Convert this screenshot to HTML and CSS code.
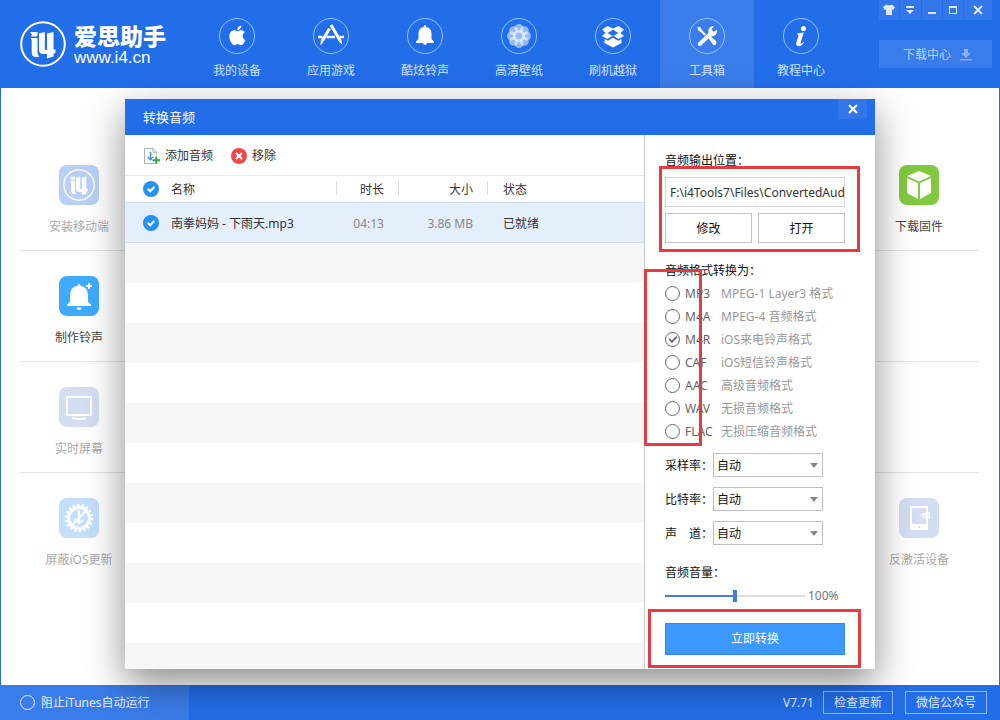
FILE: index.html
```html
<!DOCTYPE html>
<html lang="zh-CN">
<head>
<meta charset="utf-8">
<title>爱思助手</title>
<link rel="stylesheet" href="styles.css">
</head>
<body>
<svg class="defs" width="0" height="0" aria-hidden="true">
  <defs>
    <symbol id="mark" viewBox="0 0 46 46">
      <circle cx="23" cy="23" r="21.8" fill="none" stroke="currentColor" stroke-width="2"/>
      <g fill="currentColor">
        <path d="M10 11h7.500v3.500l-1.500 1h-5l1-2.300z"/>
        <path d="M10.500 17h7v14.500q0 2.500 1.500 3.200v1.300h-3q-4.300-.2-4.300-4V19z"/>
        <path d="M19 12.500l5.800-1.500v16.500q0 1.500 1.200 1.500h1V12.500L33.500 11v17.500h2v3L33.500 33v2.500L27 37.500V33h-3.500q-4.500 0-4.500-4z"/>
      </g>
    </symbol>
    <symbol id="tick" viewBox="0 0 16 16">
      <circle cx="8" cy="8" r="8" fill="#2491f4"/>
      <path d="M4.700 7.800l2.500 2.500 4.300-4.500" fill="none" stroke="#fff" stroke-width="2"/>
    </symbol>
  </defs>
</svg>

<header class="topbar">
  <a class="brand" href="#">
    <svg class="brand-mark"><use href="#mark"/></svg>
    <span class="brand-text"><strong>爱思助手</strong><span>www.i4.cn</span></span>
  </a>
  <nav class="nav">
    <a href="#">
      <svg viewBox="0 0 36 36"><circle class="ring" cx="18" cy="18" r="17.500"/>
        <path transform="translate(8.500 7.500) scale(.82)" d="M12.152 6.896c-.948 0-2.415-1.078-3.960-1.040-2.040.027-3.910 1.183-4.961 3.014-2.117 3.675-.546 9.103 1.519 12.090 1.013 1.454 2.208 3.090 3.792 3.039 1.520-.065 2.090-.987 3.935-.987 1.831 0 2.350.987 3.960.948 1.637-.026 2.676-1.480 3.676-2.948 1.156-1.688 1.636-3.325 1.662-3.415-.039-.013-3.182-1.221-3.220-4.857-.026-3.040 2.480-4.494 2.597-4.559-1.429-2.090-3.623-2.324-4.390-2.376-2-.156-3.675 1.090-4.610 1.090zM15.530 3.830c.843-1.012 1.400-2.427 1.245-3.830-1.207.052-2.662.805-3.532 1.818-.780.896-1.454 2.338-1.273 3.714 1.338.104 2.715-.688 3.559-1.701"/></svg>
      <span>我的设备</span></a>
    <a href="#">
      <svg viewBox="0 0 36 36"><circle class="ring" cx="18" cy="18" r="17.500"/>
        <g fill="none" stroke="#fff"><path stroke-width="2.400" d="M5 19h4.500M13.500 19h8.500M26.500 19H31"/><path stroke-width="3" d="M18 7l9 15.500"/><path stroke-width="3" d="M16.500 10.500L9.200 23"/></g>
        <path d="M25.700 23.300l2.600-1.500 1 5.200zM7.800 22.500l2.700 1.500-3.200 3.500z"/></svg>
      <span>应用游戏</span></a>
    <a href="#">
      <svg viewBox="0 0 36 36"><circle class="ring" cx="18" cy="18" r="17.500"/>
        <path d="M18 7q1.200 0 1.300 1.900 5.200 1 5.200 6.600v5.500l2.500 2.500v1.500h-7q-.3 2-2 2t-2-2H9v-1.500l2.500-2.500v-5.500q0-5.600 5.200-6.600Q16.800 7 18 7z"/></svg>
      <span>酷炫铃声</span></a>
    <a href="#">
      <svg viewBox="0 0 36 36"><circle class="ring" cx="18" cy="18" r="17.500"/>
        <g fill-opacity=".52"><circle cx="18" cy="10.500" r="4.500"/><circle cx="23.300" cy="12.700" r="4.500"/><circle cx="25.500" cy="18" r="4.500"/><circle cx="23.300" cy="23.300" r="4.500"/><circle cx="18" cy="25.500" r="4.500"/><circle cx="12.700" cy="23.300" r="4.500"/><circle cx="10.500" cy="18" r="4.500"/><circle cx="12.700" cy="12.700" r="4.500"/><circle cx="18" cy="18" r="6"/></g></svg>
      <span>高清壁纸</span></a>
    <a href="#">
      <svg viewBox="0 0 36 36"><circle class="ring" cx="18" cy="18" r="17.500"/>
        <path d="M12.500 8l5.500 2.500L23.500 8l5.500 3.500-3.500 3.500 3.500 3-5.500 3-5.500-3.500-5.500 3.500-5.500-3 3.500-3L7 11.500zM18 11.800L12.500 15l5.500 3.200 5.500-3.200z" fill-rule="evenodd"/><path d="M9.500 21l3.300 1.700 5.200-3 5.200 3 3.300-1.700v4L18 29.500 9.500 25z"/></svg>
      <span>刷机越狱</span></a>
    <a href="#" class="active" aria-current="page">
      <svg viewBox="0 0 36 36"><circle class="ring" cx="18" cy="18" r="17.500"/>
        <path d="M8.500 8.500l3 1 2 3.200 3.500 3.500-1.500 1.500-3.500-3.500-3-2zM19.500 20l2-2 5.500 5q1 2-.2 3.400t-3 .2z"/><path d="M9.500 24.500l10-9.500q-1-5 3.500-6.800l2-.2-2.500 3.500 2.200 2.300 3.300-2q.5 6.700-6.300 6.700l-9.500 9q-1.800 1-3-.2t.3-2.800z"/></svg>
      <span>工具箱</span></a>
    <a href="#">
      <svg viewBox="0 0 36 36"><circle class="ring" cx="18" cy="18" r="17.500"/>
        <circle cx="20.500" cy="10.500" r="2.600"/><path d="M14 15.500l6.700-.9-3 9.800q-.4 1.500.6 1.300t2.200-2l.7.500q-2.500 4-5.500 4-3.300-.2-2.400-3.400l2.200-7q.4-1.400-1.700-1.500z"/></svg>
      <span>教程中心</span></a>
  </nav>
  <div class="tools">
    <div class="window-buttons">
      <button aria-label="换肤"><svg viewBox="0 0 14 14"><path d="M1 4l3.500-2.500q2.500 1.700 5 0L13 4l-1.500 3-1.500-.7V12H4V6.300L2.500 7z"/></svg></button>
      <button aria-label="菜单"><svg viewBox="0 0 14 14"><path d="M3 3h8v2H3zM3 7h8l-4 4z"/></svg></button>
      <button aria-label="最小化"><svg viewBox="0 0 14 14"><path d="M3 9h8v2H3z"/></svg></button>
      <button aria-label="最大化"><svg viewBox="0 0 14 14"><path fill-rule="evenodd" d="M3 3h8v8H3zM4 5v5h6V5z"/></svg></button>
      <button class="wide" aria-label="关闭"><svg viewBox="0 0 14 14"><path d="M3 3l8 8M11 3l-8 8" stroke="#dce9ff" stroke-width="2"/></svg></button>
    </div>
    <button class="downloads">下载中心 <svg viewBox="0 0 12 12"><path d="M4 0h4v4h3L6 9 1 4h3zM0 10h12v1.500H0z"/></svg></button>
  </div>
</header>

<main class="toolbox">
  <div class="row">
    <a class="tile dim" href="#">
      <span class="icon navy"><svg viewBox="0 0 40 40" color="#fff"><use href="#mark" x="4" y="4" width="32" height="32"/></svg></span>安装移动端</a>
    <a class="tile" href="#">
      <span class="icon green"><svg viewBox="0 0 40 40"><path fill="#fff" d="M20 6l12 5-12 5.500L8 11zM8 13l11 5v16L8 28zM32 13l-11 5v16l11-6z"/></svg></span>下载固件</a>
  </div>
  <div class="row">
    <a class="tile" href="#">
      <span class="icon sky"><svg viewBox="0 0 40 40"><path fill="#fff" d="M20 8q1.200 0 1.400 1.700Q29 11 29 19v6q0 2 3 3.500V30H8v-1.500q3-1.500 3-3.500v-6q0-8 7.600-9.300Q18.800 8 20 8zM17.500 31.500h5Q22 34 20 34t-2.500-2.500zM29 7h2v2h2v2h-2v2h-2v-2h-2V9h2z"/></svg></span>制作铃声</a>
  </div>
  <div class="row">
    <a class="tile dim" href="#">
      <span class="icon slate"><svg viewBox="0 0 40 40" fill="none" stroke="#fff" stroke-width="2"><path d="M8 10h24v18H8zM13 31q7 2 14 0"/></svg></span>实时屏幕</a>
  </div>
  <div class="row">
    <a class="tile dim" href="#">
      <span class="icon pale"><svg viewBox="0 0 40 40" fill="none" stroke="#fff"><circle cx="20" cy="20" r="10.500" stroke-width="3"/><circle cx="20" cy="20" r="13" stroke-width="2.500" stroke-dasharray="2.400 2.138"/><path stroke-width="2" d="M13 27l14-14M20 12v12M15.500 20.500L20 25l4.500-3"/></svg></span>屏蔽iOS更新</a>
    <a class="tile dim" href="#">
      <span class="icon slate"><svg viewBox="0 0 40 40"><path fill="#fff" fill-rule="evenodd" d="M12 8h16q1 0 1 1v22q0 1-1 1H12q-1 0-1-1V9q0-1 1-1zM13 10v16h14V10zM19.500 28v2h1.500v-2z"/><path fill="#fff" fill-opacity=".7" d="M21 17h2v-2h5v-1h3v7h-3v-1h-5v-2h-2z"/></svg></span>反激活设备</a>
  </div>
</main>

<footer class="statusbar">
  <label class="block-itunes"><input type="checkbox" class="round light">阻止iTunes自动运行</label>
  <div class="status-actions"><span>V7.71</span><button>检查更新</button><button>微信公众号</button></div>
</footer>

<section class="dialog" role="dialog" aria-labelledby="dialog-title">
  <div class="dialog-head">
    <h1 id="dialog-title">转换音频</h1>
    <button aria-label="关闭"><svg viewBox="0 0 14 14"><path d="M3 3l8 8M11 3l-8 8" stroke="#fff" stroke-width="2"/></svg></button>
  </div>
  <div class="dialog-body">
    <div class="files">
      <div class="file-actions">
        <button><svg viewBox="0 0 17 17"><path d="M.5 .5h9l4 4v12H.5z" fill="#fff" stroke="#a5abb0"/><path d="M9.500 .5v4h4" fill="none" stroke="#a5abb0"/><path d="M7 4v8M4 9.500L7 12.500l3-3" fill="none" stroke="#2c8df0" stroke-width="1.500"/><path d="M13 8v9M8.500 12.500h8.500" stroke="#fff" stroke-width="4"/><path d="M13 9v8M9 13h8" stroke="#2fa84a" stroke-width="2"/></svg>添加音频</button>
        <button><svg viewBox="0 0 16 16"><circle cx="8" cy="8" r="8" fill="#f04848"/><path d="M5 5l6 6M11 5l-6 6" stroke="#fff" stroke-width="2"/></svg>移除</button>
      </div>
      <table>
        <colgroup><col class="c-check"><col><col class="c-time"><col class="c-size"><col class="c-state"></colgroup>
        <thead><tr><th><svg class="tick"><use href="#tick"/></svg></th><th>名称</th><th class="num split">时长</th><th class="num split">大小</th><th class="split">状态</th></tr></thead>
        <tbody><tr><td><svg class="tick"><use href="#tick"/></svg></td><td>南拳妈妈 - 下雨天.mp3</td><td class="num">04:13</td><td class="num">3.86 MB</td><td>已就绪</td></tr></tbody>
      </table>
    </div>

    <form class="settings">
      <div class="output">
        <label for="path">音频输出位置：</label>
        <input id="path" type="text" value="F:\i4Tools7\Files\ConvertedAudio">
        <div class="pair"><button type="button">修改</button><button type="button">打开</button></div>
        <span class="frame frame-output"></span>
      </div>
      <div class="formats" role="radiogroup" aria-labelledby="fmt">
        <h2 id="fmt">音频格式转换为：</h2>
        <label><input class="round" type="radio" name="f"><b>MP3</b><span>MPEG-1 Layer3 格式</span></label>
        <label><input class="round" type="radio" name="f"><b>M4A</b><span>MPEG-4 音频格式</span></label>
        <label><input class="round" type="radio" name="f" checked><b>M4R</b><span>iOS来电铃声格式</span></label>
        <label><input class="round" type="radio" name="f"><b>CAF</b><span>iOS短信铃声格式</span></label>
        <label><input class="round" type="radio" name="f"><b>AAC</b><span>高级音频格式</span></label>
        <label><input class="round" type="radio" name="f"><b>WAV</b><span>无损音频格式</span></label>
        <label><input class="round" type="radio" name="f"><b>FLAC</b><span>无损压缩音频格式</span></label>
        <span class="frame frame-formats"></span>
      </div>
      <div class="options">
        <label for="rate">采样率：</label><span class="select"><select id="rate"><option>自动</option></select></span>
        <label for="bits">比特率：</label><span class="select"><select id="bits"><option>自动</option></select></span>
        <label for="chan">声　道：</label><span class="select"><select id="chan"><option>自动</option></select></span>
      </div>
      <label class="volume-label" for="vol">音频音量：</label>
      <div class="volume"><input id="vol" type="range" min="0" max="200" value="100"><output for="vol">100%</output></div>
      <div class="submit"><button type="button">立即转换</button><span class="frame frame-submit"></span></div>
    </form>
  </div>
</section>
</body>
</html>
```
FILE: styles.css
```css
*, *::after { box-sizing: border-box; }

body {
  position: relative;
  display: flex;
  flex-direction: column;
  min-height: 100vh;
  margin: 0;
  background: #fff;
  color: #333;
  font: 12px/20px "Noto Sans", "Noto Sans CJK SC", sans-serif;
}

a { color: inherit; text-decoration: none; }
h1, h2 { margin: 0; font-size: 12px; font-weight: 400; }
svg { display: block; flex: none; }
button, input, select { margin: 0; font: inherit; color: inherit; }
button {
  display: flex;
  align-items: center;
  justify-content: center;
  padding: 0;
  border: 0;
  background: none;
}
.defs { position: absolute; }

/* Top bar */
.topbar { display: flex; height: 88px; background: #226de8; color: #cfe2ff; }
.brand {
  display: flex;
  gap: 8px;
  width: 190px;
  padding: 21px 0 0 20px;
  color: #fff;
}
.brand-mark { width: 46px; height: 46px; }
.brand-text { display: flex; flex-direction: column; font: 17px/18px "Liberation Sans", sans-serif; }
.brand-text strong { font: 900 23px/28px "Noto Sans CJK SC", sans-serif; }
.nav { display: flex; }
.nav a {
  display: flex;
  flex-direction: column;
  align-items: center;
  gap: 7px;
  width: 94px;
  padding-top: 18px;
}
.nav .active { background: #3a7ce9; }
.nav svg { width: 36px; height: 36px; fill: #fff; }
.nav .ring { fill: none; stroke: #8fc4ff; }
.tools { width: 113px; margin: 0 8px 0 auto; }
.window-buttons { display: flex; gap: 1px; }
.window-buttons button { flex: 1; height: 20px; background: #3276e9; }
.window-buttons .wide { flex: none; width: 28px; }
.window-buttons svg { width: 14px; height: 14px; fill: #dce9ff; }
.downloads {
  gap: 9px;
  width: 100%;
  height: 28px;
  padding: 2px 0 0 4px;
  margin-top: 20px;
  background: #3a7ce9;
  color: #b4d0fb;
}
.downloads svg { width: 12px; height: 12px; fill: #87b0f3; }

/* Tool tiles */
.toolbox { flex: 1; padding: 52px 20px 0 18px; border: solid #226de8; border-width: 0 1px; }
.row {
  display: flex;
  justify-content: space-between;
  height: 111px;
  padding-top: 25px;
  border-bottom: 1px solid #e4e4e4;
}
.row:last-child { border: 0; }
.tile {
  display: flex;
  flex-direction: column;
  align-items: center;
  gap: 12px;
  width: 120px;
  color: #444;
}
.dim { color: #aaa; }
.icon { width: 40px; height: 40px; border-radius: 8px; }
.navy { background: #b9cff5; }
.green { background: #82c93e; }
.sky { background: #3eabff; }
.slate { background: #d4ddf2; }
.pale { background: #c3dffc; }

/* Status bar */
.statusbar {
  display: flex;
  justify-content: space-between;
  height: 35px;
  background: #226de8;
  color: #e4efff;
}
.block-itunes {
  display: flex;
  align-items: center;
  gap: 6px;
  width: 189px;
  padding-left: 20px;
  background: #3a7ce9;
}
.status-actions { display: flex; align-items: center; gap: 12px; padding-right: 13px; }
.status-actions span { margin-right: -3px; }
.status-actions button { height: 23px; padding: 0 10px; border: 1px solid #8ebaf9; }

/* Round tick controls */
.round {
  display: grid;
  flex: none;
  place-items: center;
  width: 15px;
  height: 15px;
  border: 1px solid #666;
  border-radius: 50%;
  appearance: none;
}
.round:checked::after {
  width: 8px;
  height: 5px;
  margin-bottom: 2px;
  border: solid #66727f;
  border-width: 0 0 2px 2px;
  content: "";
  transform: rotate(-45deg);
}
.light { border-color: #e4efff; }

/* Dialog */
.dialog {
  position: absolute;
  top: 99px;
  right: 12.5%;
  left: 12.5%;
  background: #fff;
  box-shadow: 0 14px 36px rgba(0, 0, 0, .45);
}
.dialog-head {
  display: flex;
  align-items: flex-start;
  justify-content: space-between;
  padding: 0 8px 0 18px;
  background: #226de8;
  color: #fff;
}
.dialog-head h1 { font-size: 13px; line-height: 36px; }
.dialog-head button { width: 29px; height: 20px; background: #3276e9; }
.dialog-head svg { width: 14px; height: 14px; }
.dialog-body { display: flex; }

.files {
  flex: 1;
  background: repeating-linear-gradient(#f7f7f7 0 40px, #fff 40px 80px) 0 108px no-repeat;
}
.file-actions {
  display: flex;
  gap: 18px;
  height: 41px;
  padding: 2px 0 0 19px;
  border-bottom: 1px solid #e8ebee;
}
.file-actions button { gap: 5px; }
.file-actions svg { width: 16px; height: 16px; }
table { width: 100%; border-spacing: 0; table-layout: fixed; }
.c-check { width: 46px; }
.c-time { width: 62px; }
.c-size { width: 89px; }
.c-state { width: 157px; }
th, td { padding: 2px 0 0; border-bottom: 1px solid #d3dfec; font-weight: 400; text-align: left; }
th { height: 27px; }
td { height: 40px; background: #e5effb; }
th:first-child, td:first-child { padding: 0 0 0 18px; }
th:last-child, td:last-child { padding-left: 16px; }
th.num, td.num { padding-right: 14px; text-align: right; }
td.num { color: #808890; }
.split { background: linear-gradient(#d8dce0, #d8dce0) 0 5px / 1px 14px no-repeat; }
.tick { width: 16px; height: 16px; }

.settings { width: 231px; padding: 16px 30px 14px 20px; border-left: 1px solid #c8ccd0; color: #111; }
.output, .formats, .submit { position: relative; }
.output > label { display: block; margin-bottom: 6px; }
.output input {
  display: block;
  width: 100%;
  height: 30px;
  padding: 0 0 0 4px;
  border: 1px solid #d5d5d5;
  color: #333;
}
.pair { display: flex; gap: 6px; margin-top: 6px; }
.pair button { flex: 1; height: 30px; padding-top: 2px; border: 1px solid #c3c3c8; }
.formats { margin-top: 18px; }
.formats h2 { margin-bottom: 1px; }
.formats label { display: flex; align-items: center; height: 23px; color: #999; }
.formats b { width: 36px; margin-left: 5px; color: #666; font-weight: 400; }
.options {
  display: grid;
  grid-template-columns: 48px 110px;
  gap: 10px 0;
  align-items: center;
  margin-top: 10px;
}
.options label { padding-top: 2px; white-space: nowrap; }
.select { position: relative; z-index: 1; }
.select::after {
  position: absolute;
  top: 10px;
  right: 5px;
  border: solid transparent;
  border-width: 5px 4px 0;
  border-top-color: #888;
  content: "";
  pointer-events: none;
}
select {
  display: block;
  width: 100%;
  height: 24px;
  padding: 2px 3px 0;
  border: 1px solid #bfbfc4;
  border-radius: 0;
  background: #fff;
  appearance: none;
}
.volume-label { display: block; margin-top: 18px; }
.volume { display: flex; align-items: center; gap: 3px; height: 20px; margin-top: 3px; color: #777; }
.volume input { width: 140px; height: 12px; background: none; appearance: none; }
.volume input::-webkit-slider-runnable-track {
  height: 2px;
  background: linear-gradient(90deg, #4a7bd4 50%, #ddd 50%);
}
.volume input::-webkit-slider-thumb {
  width: 4px;
  height: 12px;
  margin-top: -5px;
  background: #4a7bd4;
  appearance: none;
}
.submit { margin-top: 17px; }
.submit button {
  width: 100%;
  height: 32px;
  border: 1px solid #318aec;
  background: #3d99ff;
  color: #fff;
}

/* Highlight frames over the panel */
.frame { position: absolute; z-index: 2; border: 3px solid #e63c41; pointer-events: none; }
.frame-output { inset: 15px -15px -9px -6px; }
.frame-formats { inset: 8px 143px -3px -21px; }
.frame-submit { inset: -14px -16px -13px -17px; }
```
